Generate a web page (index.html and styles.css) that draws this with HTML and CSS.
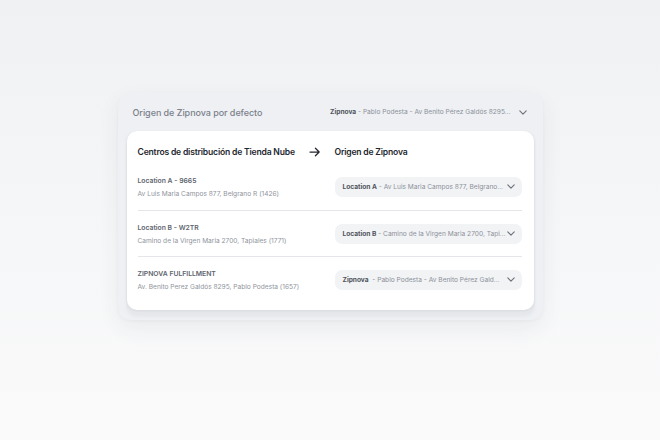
FILE: index.html
```html
<!doctype html>
<html>
  <head>
    <link rel="stylesheet" href="styles.css">
  </head>
  <body>
    <div class="page">
      <div class="panel">
        <div class="panel-head">
          <span class="panel-title">Origen de Zipnova por defecto</span>
          <div class="default-pick">
            <span class="pick-text"><b>Zipnova</b> - Pablo Podesta - Av Benito Pérez Galdós 8295...</span>
            <svg class="chev" viewBox="0 0 10 6"><path d="M1 1l4 4 4-4"/></svg>
          </div>
        </div>
        <div class="stack">
          <div class="card">
            <div class="card-head">
              <span class="col-left">Centros de distribución de Tienda Nube</span>
              <svg class="arrow" viewBox="0 0 14 12"><path d="M1 6h11M7.5 1.5L12 6l-4.5 4.5"/></svg>
              <span class="col-right">Origen de Zipnova</span>
            </div>

            <div class="row">
              <div class="loc">
                <div class="loc-name">Location A - 9665</div>
                <div class="loc-addr">Av Luis Maria Campos 877, Belgrano R (1426)</div>
              </div>
              <div class="select">
                <span class="select-text"><b>Location A</b> - Av Luis Maria Campos 877, Belgrano...</span>
                <svg class="chev" viewBox="0 0 10 6"><path d="M1 1l4 4 4-4"/></svg>
              </div>
            </div>

            <div class="row">
              <div class="loc">
                <div class="loc-name">Location B - W2TR</div>
                <div class="loc-addr">Camino de la Virgen Maria 2700, Tapiales (1771)</div>
              </div>
              <div class="select">
                <span class="select-text"><b>Location B</b> - Camino de la Virgen Maria 2700, Tapi...</span>
                <svg class="chev" viewBox="0 0 10 6"><path d="M1 1l4 4 4-4"/></svg>
              </div>
            </div>

            <div class="row">
              <div class="loc">
                <div class="loc-name">ZIPNOVA FULFILLMENT</div>
                <div class="loc-addr">Av. Benito Perez Galdós 8295, Pablo Podesta (1657)</div>
              </div>
              <div class="select">
                <span class="select-text"><b>Zipnova</b>&nbsp; - Pablo Podesta - Av Benito Pérez Gald...</span>
                <svg class="chev" viewBox="0 0 10 6"><path d="M1 1l4 4 4-4"/></svg>
              </div>
            </div>
          </div>
        </div>
      </div>
    </div>
  </body>
</html>
```

FILE: styles.css
```css
body {
  margin: 0;
  font-family: Inter, "Noto Sans", sans-serif;
  background: #f7f8fa;
}

.page {
  width: 660px;
  height: 440px;
  display: flex;
  justify-content: center;
  padding-top: 93px;
  box-sizing: border-box;
  background: linear-gradient(180deg, #f0f1f3 0%, #f6f7f8 55%, #fafafb 100%);
}

.panel {
  width: 425px;
  height: 227px;
  box-sizing: border-box;
  background: #eef0f3;
  border-radius: 12px;
  padding: 0 9px;
  box-shadow: 0 8px 22px rgba(40, 50, 70, 0.07), 0 1px 3px rgba(40, 50, 70, 0.04);
}

.panel-head {
  height: 38px;
  display: flex;
  align-items: center;
  justify-content: space-between;
  padding: 0 7px 0 6px;
}

.panel-title {
  font-size: 9px;
  font-weight: 500;
  letter-spacing: -0.05px;
  color: #7b818c;
}

.default-pick {
  display: flex;
  align-items: center;
  gap: 8px;
}

.pick-text {
  font-size: 6.6px;
  color: #8c919a;
}

.pick-text b {
  color: #50545c;
  font-weight: 700;
}

.chev {
  width: 8px;
  height: 5px;
  fill: none;
  stroke: #6d727b;
  stroke-width: 1.4;
  stroke-linecap: round;
  stroke-linejoin: round;
  flex: none;
}

.stack {
  border-radius: 10px;
  background: #e6e8ec;
  padding-bottom: 4px;
  box-shadow: 0 2px 4px rgba(40, 50, 70, 0.06);
}

.card {
  background: #ffffff;
  border-radius: 10px;
  padding: 10px 12px 8px 11px;
  box-shadow: 0 1px 3px rgba(40, 50, 70, 0.08);
}

.card-head {
  height: 22px;
  display: flex;
  align-items: center;
  white-space: nowrap;
  font-size: 8.6px;
  font-weight: 600;
  letter-spacing: -0.2px;
  color: #24272e;
}

.col-left {
  width: 171px;
}

.arrow {
  width: 12px;
  height: 10px;
  fill: none;
  stroke: #24272e;
  stroke-width: 1.5;
  stroke-linecap: round;
  stroke-linejoin: round;
  margin-right: 14px;
}

.row {
  height: 45px;
  display: flex;
  align-items: center;
  justify-content: space-between;
  border-top: 1px solid #e4e6ea;
}

.card-head + .row {
  border-top: none;
  height: 47px;
}

.loc-name {
  font-size: 6.8px;
  font-weight: 600;
  color: #60656e;
  margin-bottom: 5px;
}

.loc-addr {
  font-size: 6.6px;
  color: #8f949c;
}

.select {
  width: 187px;
  height: 20px;
  box-sizing: border-box;
  background: #f2f3f5;
  border-radius: 7px;
  display: flex;
  align-items: center;
  gap: 6px;
  padding: 0 7px 0 8px;
}

.select-text {
  flex: 1;
  min-width: 0;
  white-space: nowrap;
  font-size: 6.6px;
  color: #8c919a;
}

.select-text b {
  color: #50545c;
  font-weight: 700;
}
```
